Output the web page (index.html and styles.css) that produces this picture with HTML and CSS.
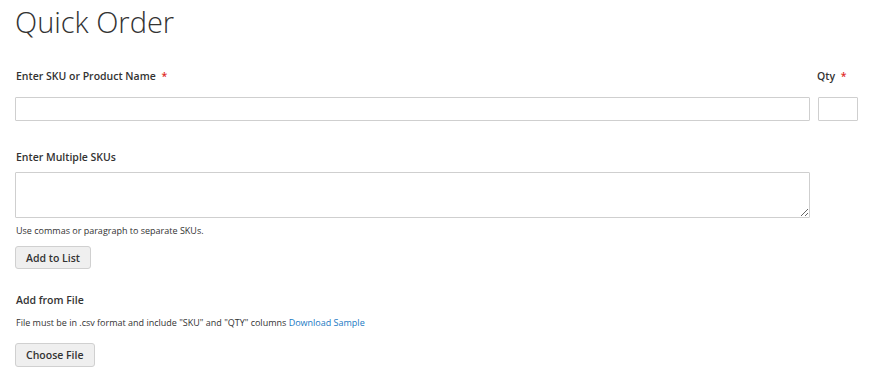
FILE: index.html
```html
<!DOCTYPE html>
<html>
<head>
<meta charset="utf-8">
<link rel="stylesheet" href="styles.css">
</head>
<body>
<div class="page">
  <h1 class="title">Quick Order</h1>
  <form class="form">
    <div class="field sku">
      <label class="label">Enter SKU or Product Name <span class="req">*</span></label>
      <input class="input" type="text">
    </div>
    <div class="field qty">
      <label class="label">Qty <span class="req">*</span></label>
      <input class="input" type="text">
    </div>
    <div class="field multi">
      <label class="label">Enter Multiple SKUs</label>
      <textarea class="textarea"></textarea>
      <p class="note">Use commas or paragraph to separate SKUs.</p>
      <button type="button" class="btn">Add to List</button>
    </div>
    <div class="field file">
      <label class="label">Add from File</label>
      <p class="note file-note">File must be in .csv format and include "SKU" and "QTY" columns <a class="link" href="#">Download Sample</a></p>
      <button type="button" class="btn">Choose File</button>
    </div>
  </form>
</div>
</body>
</html>
```
FILE: styles.css
```css
* { box-sizing: border-box; }
body {
  margin: 0;
  background: #fff;
  font-family: "Open Sans", "Liberation Sans", sans-serif;
  color: #333;
}
.page {
  padding: 4px 30px 0 15px;
}
.title {
  margin: 0;
  font-size: 29px;
  font-weight: 300;
  line-height: 36px;
  color: #333;
}
.form {
  display: grid;
  grid-template-columns: 1fr 40px;
  column-gap: 8px;
  margin-top: 29px;
}
.field { display: flex; flex-direction: column; }
.label {
  font-size: 10.5px;
  font-weight: 600;
  line-height: 15px;
  padding-left: 1px;
  color: #333;
}
.req { color: #e02b27; margin-left: 3px; }
.sku .label, .qty .label { margin-bottom: 13px; }
.input {
  height: 24px;
  border: 1px solid #cfcfcf;
  border-radius: 1px;
  background: #fff;
  margin: 0;
}
.qty .label { padding-left: 0; margin-left: -1px; }
.multi {
  grid-column: 1;
  margin-top: 29px;
  align-items: flex-start;
}
.multi .label { margin-bottom: 7px; }
.textarea {
  width: 100%;
  height: 46px;
  border: 1px solid #cfcfcf;
  border-radius: 1px;
  margin: 0;
  resize: vertical;
}
.note {
  margin: 6px 0 0;
  font-size: 9px;
  line-height: 13px;
  color: #333;
  padding-left: 1px;
}
.btn {
  margin-top: 9px;
  height: 23px;
  padding: 0 10px;
  background: #efefef;
  border: 1px solid #d0d0d0;
  border-radius: 3px;
  font-family: "Open Sans", "Liberation Sans", sans-serif;
  font-size: 10.5px;
  font-weight: 600;
  color: #333;
}
.file {
  grid-column: 1;
  margin-top: 24px;
  align-items: flex-start;
}
.file-note { margin-top: 8px; }
.file .btn { margin-top: 14px; height: 24px; }
.link { color: #1979c3; text-decoration: none; }
```
